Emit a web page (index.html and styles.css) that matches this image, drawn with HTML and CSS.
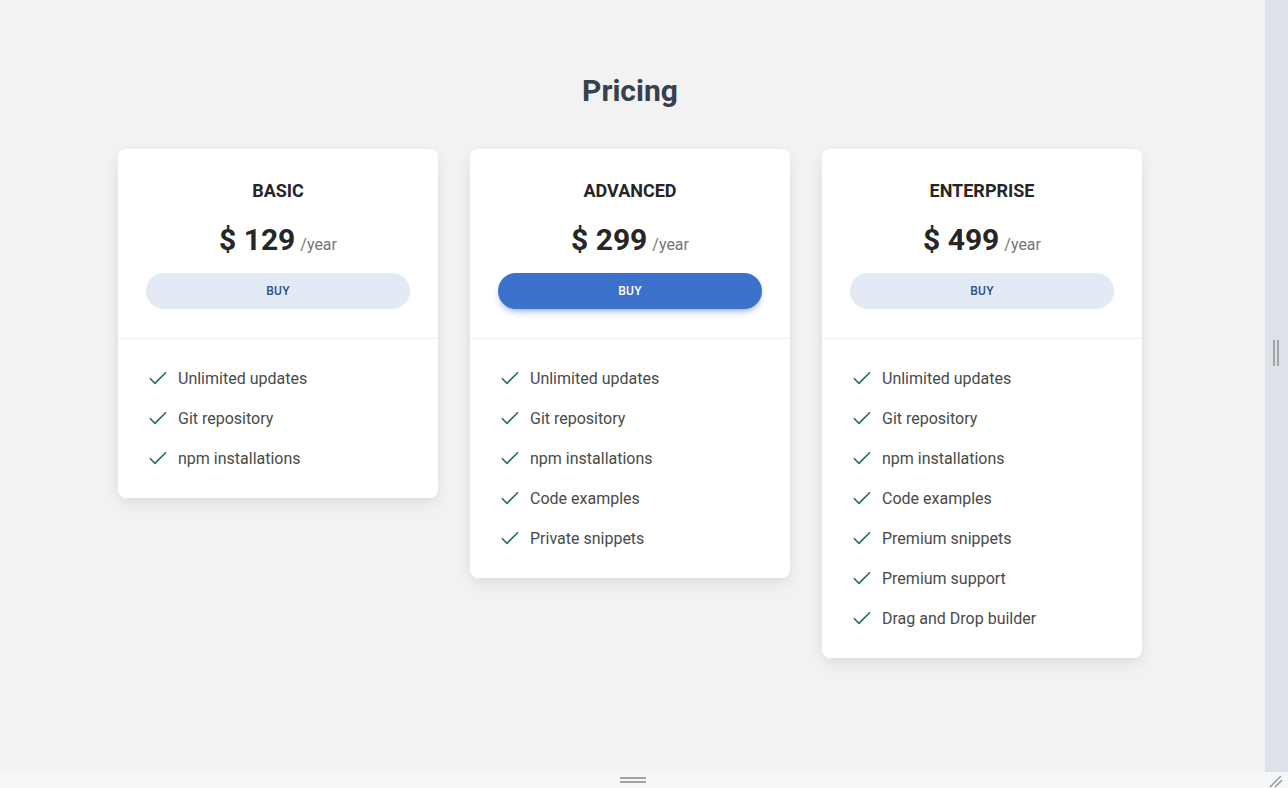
FILE: index.html
```html
<!DOCTYPE html>
<html lang="en">
<head>
<meta charset="utf-8">
<title>Pricing</title>
<link rel="stylesheet" href="styles.css">
</head>
<body>
<div class="frame">
  <main class="stage">
    <section class="pricing">
      <h2 class="pricing-title">Pricing</h2>
      <div class="cards">
        <article class="card">
          <header class="card-head">
            <h3 class="plan">BASIC</h3>
            <p class="price"><span class="amount">$ 129</span><span class="per">/year</span></p>
            <button class="buy">BUY</button>
          </header>
          <ul class="features">
            <li><svg class="check" viewBox="0 0 18 14"><path d="M1 7.2 L6 12.4 L17 1.2"/></svg>Unlimited updates</li>
            <li><svg class="check" viewBox="0 0 18 14"><path d="M1 7.2 L6 12.4 L17 1.2"/></svg>Git repository</li>
            <li><svg class="check" viewBox="0 0 18 14"><path d="M1 7.2 L6 12.4 L17 1.2"/></svg>npm installations</li>
          </ul>
        </article>
        <article class="card">
          <header class="card-head">
            <h3 class="plan">ADVANCED</h3>
            <p class="price"><span class="amount">$ 299</span><span class="per">/year</span></p>
            <button class="buy buy-primary">BUY</button>
          </header>
          <ul class="features">
            <li><svg class="check" viewBox="0 0 18 14"><path d="M1 7.2 L6 12.4 L17 1.2"/></svg>Unlimited updates</li>
            <li><svg class="check" viewBox="0 0 18 14"><path d="M1 7.2 L6 12.4 L17 1.2"/></svg>Git repository</li>
            <li><svg class="check" viewBox="0 0 18 14"><path d="M1 7.2 L6 12.4 L17 1.2"/></svg>npm installations</li>
            <li><svg class="check" viewBox="0 0 18 14"><path d="M1 7.2 L6 12.4 L17 1.2"/></svg>Code examples</li>
            <li><svg class="check" viewBox="0 0 18 14"><path d="M1 7.2 L6 12.4 L17 1.2"/></svg>Private snippets</li>
          </ul>
        </article>
        <article class="card">
          <header class="card-head">
            <h3 class="plan">ENTERPRISE</h3>
            <p class="price"><span class="amount">$ 499</span><span class="per">/year</span></p>
            <button class="buy">BUY</button>
          </header>
          <ul class="features">
            <li><svg class="check" viewBox="0 0 18 14"><path d="M1 7.2 L6 12.4 L17 1.2"/></svg>Unlimited updates</li>
            <li><svg class="check" viewBox="0 0 18 14"><path d="M1 7.2 L6 12.4 L17 1.2"/></svg>Git repository</li>
            <li><svg class="check" viewBox="0 0 18 14"><path d="M1 7.2 L6 12.4 L17 1.2"/></svg>npm installations</li>
            <li><svg class="check" viewBox="0 0 18 14"><path d="M1 7.2 L6 12.4 L17 1.2"/></svg>Code examples</li>
            <li><svg class="check" viewBox="0 0 18 14"><path d="M1 7.2 L6 12.4 L17 1.2"/></svg>Premium snippets</li>
            <li><svg class="check" viewBox="0 0 18 14"><path d="M1 7.2 L6 12.4 L17 1.2"/></svg>Premium support</li>
            <li><svg class="check" viewBox="0 0 18 14"><path d="M1 7.2 L6 12.4 L17 1.2"/></svg>Drag and Drop builder</li>
          </ul>
        </article>
      </div>
    </section>
  </main>
  <aside class="side-handle"><span class="grip-v"></span></aside>
  <div class="bottom-handle"><span class="grip-h"></span></div>
  <div class="corner"><svg viewBox="0 0 23 16" class="resize"><path d="M5 15 L16 4 M10 15 L17 8"/></svg></div>
</div>
</body>
</html>
```

FILE: styles.css
```css
* { box-sizing: border-box; }
html, body { margin: 0; padding: 0; }
body {
  font-family: Roboto, "Liberation Sans", Arial, sans-serif;
  background: #f2f2f2;
  overflow: hidden;
}
.frame {
  display: grid;
  grid-template-columns: 1265px 23px;
  grid-template-rows: 772px 16px;
  width: 1288px;
  height: 788px;
}
.stage {
  background: #f2f2f2;
  padding: 73px 5px 0 0;
  overflow: hidden;
}
.pricing {
  width: 1024px;
  margin: 0 auto;
}
.pricing-title {
  margin: 0 0 40px;
  text-align: center;
  font-size: 30px;
  line-height: 36px;
  font-weight: 700;
  color: #37404e;
}
.cards {
  display: grid;
  grid-template-columns: repeat(3, 320px);
  gap: 32px;
  align-items: start;
}
.card {
  background: #fff;
  border-radius: 8px;
  box-shadow: 0 2px 15px -3px rgba(0,0,0,.09), 0 10px 20px -2px rgba(0,0,0,.05);
}
.card-head {
  padding: 30px 28px 29px;
  text-align: center;
  border-bottom: 1px solid #eeeeee;
}
.plan {
  margin: 0;
  font-size: 18px;
  line-height: 24px;
  font-weight: 700;
  color: #262626;
}
.price {
  display: flex;
  justify-content: center;
  align-items: baseline;
  gap: 5px;
  height: 40px;
  margin: 17px 0 13px;
  line-height: 40px;
}
.amount {
  font-size: 30px;
  font-weight: 700;
  color: #262626;
}
.per {
  font-size: 16px;
  color: #757575;
}
.buy {
  display: block;
  width: 100%;
  height: 36px;
  border: 0;
  border-radius: 18px;
  background: #e3e9f5;
  color: #2f4f91;
  font-family: inherit;
  font-size: 12px;
  font-weight: 500;
  letter-spacing: .02em;
}
.buy-primary {
  background: #3b71ca;
  color: #fff;
  box-shadow: 0 4px 9px -4px rgba(59,113,202,.9);
}
.features {
  list-style: none;
  margin: 0;
  padding: 19px 28px 20px;
}
.features li {
  display: flex;
  align-items: center;
  height: 40px;
  font-size: 16px;
  color: #4a4a4a;
}
.check {
  width: 18px;
  height: 14px;
  margin: 0 11px 0 3px;
  flex: none;
}
.check path {
  fill: none;
  stroke: #1f6b41;
  stroke-width: 1.5;
}
.side-handle {
  background: #dde1e9;
  display: flex;
  align-items: flex-start;
  justify-content: center;
  padding-top: 340px;
}
.grip-v {
  width: 6px;
  height: 26px;
  border-left: 2px solid #a3a3a3;
  border-right: 2px solid #a3a3a3;
  margin-left: -2px;
}
.bottom-handle {
  background: #f5f6f8;
  display: flex;
  align-items: center;
  justify-content: center;
}
.grip-h {
  width: 26px;
  height: 6px;
  border-top: 2px solid #a3a3a3;
  border-bottom: 2px solid #a3a3a3;
}
.corner {
  background: #f5f6f8;
}
.resize {
  width: 23px;
  height: 16px;
  display: block;
}
.resize path {
  stroke: #9a9a9a;
  stroke-width: 1.5;
  fill: none;
}
```
